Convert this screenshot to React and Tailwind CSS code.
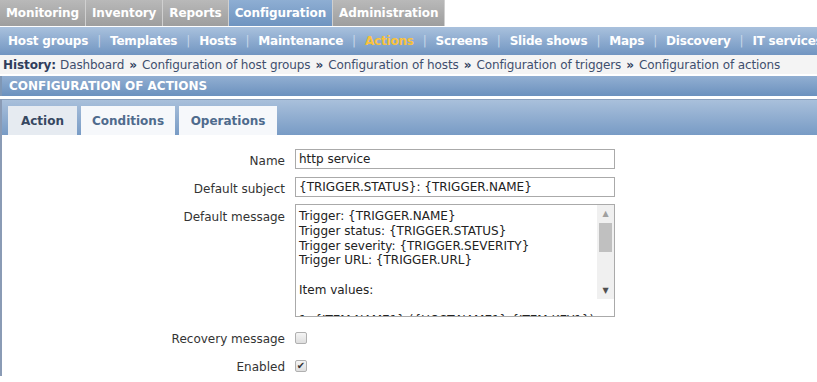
import React from "react";

const top = ["Monitoring", "Inventory", "Reports", "Configuration", "Administration"];
const sub = ["Host groups", "Templates", "Hosts", "Maintenance", "Actions", "Screens", "Slide shows", "Maps", "Discovery", "IT services"];
const hist = ["Dashboard", "Configuration of host groups", "Configuration of hosts", "Configuration of triggers", "Configuration of actions"];

const msg = `Trigger: {TRIGGER.NAME}
Trigger status: {TRIGGER.STATUS}
Trigger severity: {TRIGGER.SEVERITY}
Trigger URL: {TRIGGER.URL}

Item values:

1. {ITEM.NAME1} ({HOST.NAME1}:{ITEM.KEY1}): {ITEM.VALUE1}`;

export default function App() {
  return (
    <div className="w-[817px] h-[382px] overflow-hidden bg-white" style={{ fontFamily: "Tahoma, 'DejaVu Sans', sans-serif" }}>
      {/* top nav */}
      <div className="flex h-[27px] bg-white">
        {top.map((t) => (
          <div
            key={t}
            className={
              "px-[6px] h-[26px] flex items-center text-[12px] tracking-[-0.1px] font-bold text-white border-r border-[#d0d0d0] " +
              (t === "Configuration"
                ? "bg-gradient-to-b from-[#8eaed3] to-[#6f94c0]"
                : "bg-gradient-to-b from-[#b9b9b9] to-[#9e9e9e]")
            }
          >
            {t}
          </div>
        ))}
      </div>
      {/* sub nav */}
      <div className="h-[28px] flex items-center px-[8px] bg-gradient-to-b from-[#a9c1dd] to-[#7195c1] whitespace-nowrap text-[12px] tracking-[-0.2px] font-bold">
        {sub.map((s, i) => (
          <React.Fragment key={s}>
            {i > 0 && <span className="text-[#c7d6e8] font-normal mx-[9px]">|</span>}
            <span className={s === "Actions" ? "text-[#f9c23c]" : "text-white"}>{s}</span>
          </React.Fragment>
        ))}
      </div>
      {/* history */}
      <div className="h-[19px] flex items-center px-[3px] bg-[#f4f4f4] text-[12px] tracking-[-0.1px] text-[#3f4f6e] whitespace-nowrap">
        <span className="font-bold text-[#2f3d5c] mr-[4px]">History:</span>
        {hist.map((h, i) => (
          <React.Fragment key={h}>
            {i > 0 && <span className="mx-[5px] font-bold text-[#2f3d5c]">»</span>}
            <span>{h}</span>
          </React.Fragment>
        ))}
      </div>
      {/* header */}
      <div className="mt-[2px] h-[20px] flex items-center px-[7px] bg-gradient-to-b from-[#92afd2] to-[#6c91be] text-white text-[12px] font-bold border-l-2 border-[#7f97b5]">
        CONFIGURATION OF ACTIONS
      </div>
      {/* panel */}
      <div className="mt-[3px] border-l-2 border-[#8a9bb5] ml-0">
        <div className="h-[36px] flex items-end gap-[4px] pl-[6px] bg-gradient-to-b from-[#a9c0db] to-[#789bc5] border-t border-[#8aa0bd]">
          <div className="h-[29px] w-[69px] flex items-center justify-center bg-[#e6ebf1] text-[12px] font-bold text-[#364861]">Action</div>
          <div className="h-[29px] w-[94px] flex items-center justify-center bg-[#f6f8fb] text-[12px] font-bold text-[#4f6b8d]">Conditions</div>
          <div className="h-[29px] w-[98px] flex items-center justify-center bg-[#f6f8fb] text-[12px] font-bold text-[#4f6b8d]">Operations</div>
        </div>
        <div className="bg-white pt-[14px] text-[12px] text-[#333]">
          <div className="grid grid-cols-[283px_1fr] gap-x-[10px] items-start">
            <div className="text-right pt-[3px]">Name</div>
            <div className="h-[20px] w-[320px] border border-[#aaa] px-[3px] flex items-center text-[12px] text-[#222]">http service</div>
            <div className="text-right pt-[3px] mt-[7px]">Default subject</div>
            <div className="mt-[7px] h-[20px] w-[320px] border border-[#aaa] px-[3px] flex items-center text-[12px] text-[#222]">{"{TRIGGER.STATUS}: {TRIGGER.NAME}"}</div>
            <div className="text-right pt-[3px] mt-[7px]">Default message</div>
            <div className="mt-[6px] h-[113px] w-[320px] border border-[#aaa] flex overflow-hidden relative">
              <pre className="flex-1 px-[3px] pt-[4px] text-[12px] leading-[14.8px] text-[#222] whitespace-pre overflow-hidden" style={{ fontFamily: "Tahoma, 'DejaVu Sans', sans-serif" }}>{msg}</pre>
              <div className="w-[17px] bg-[#f0f0f0] flex flex-col items-center">
                <div className="h-[17px] flex items-center justify-center text-[#a0a0a0] text-[8px]">▲</div>
                <div className="w-[13px] h-[29px] bg-[#c0c0c0] mt-[1px]"></div>
                <div className="flex-1"></div>
                <div className="h-[17px] flex items-center justify-center text-[#505050] text-[8px]">▼</div>
                <div className="h-[17px] w-[17px] bg-white"></div>
              </div>
            </div>
            <div className="text-right mt-[13px]">Recovery message</div>
            <div className="mt-[15px] w-[12px] h-[12px] border border-[#b0b0b0] rounded-[2px] bg-gradient-to-b from-[#f5f5f5] to-[#dedede]"></div>
            <div className="text-right mt-[10px]">Enabled</div>
            <div className="mt-[12px] w-[12px] h-[12px] border border-[#b0b0b0] rounded-[2px] bg-gradient-to-b from-[#f5f5f5] to-[#dedede] flex items-center justify-center text-[10px] leading-none text-[#333]">✔</div>
          </div>
        </div>
      </div>
    </div>
  );
}
